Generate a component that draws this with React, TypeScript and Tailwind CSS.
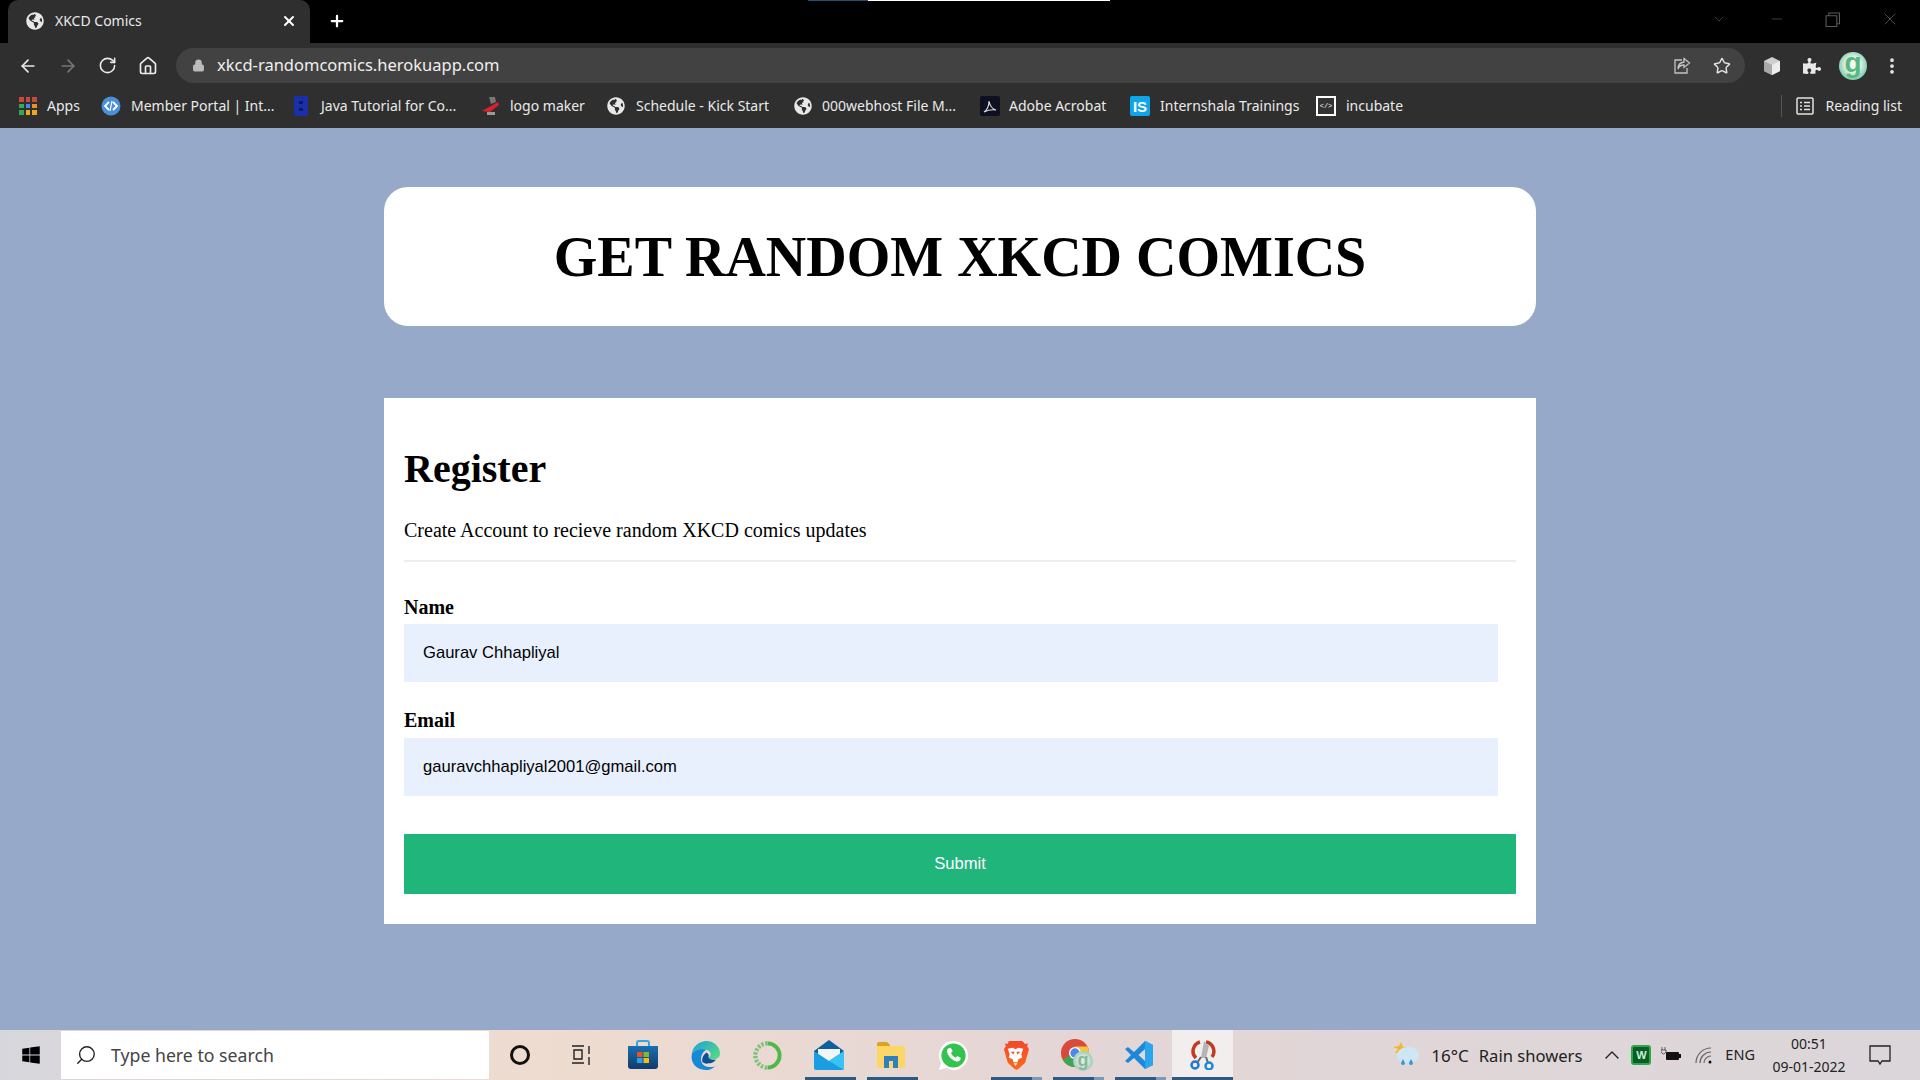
import { ArrowLeft, ArrowRight, RotateCw, Home, Lock, Star, Search, ChevronUp, ChevronDown, Minus, X, Plus, MoreVertical } from "lucide-react";
import { FaGlobeAmericas, FaPuzzlePiece, FaWindows } from "react-icons/fa";

function Globe() {
  return <FaGlobeAmericas className="h-[18px] w-[18px] text-[#e8e8e8]" />;
}

function AppsGrid() {
  const colors = ["bg-[#c9483c]", "bg-[#c9483c]", "bg-[#c9483c]", "bg-[#34a853]", "bg-[#4285f4]", "bg-[#f09020]", "bg-[#34a853]", "bg-[#e8a820]", "bg-[#e8a820]"];
  return (
    <div className="grid h-[18px] w-[18px] grid-cols-3 gap-[2px]">
      {colors.map((c, i) => (
        <div key={i} className={c} />
      ))}
    </div>
  );
}

function MemberIcon() {
  return (
    <svg viewBox="0 0 20 20" className="h-5 w-5">
      <circle cx="10" cy="10" r="9.5" fill="#4a90d9" />
      <path d="M8 6l-4 4 4 4M12 6l4 4-4 4" stroke="#fff" strokeWidth="1.8" fill="none" />
      <path d="M11 5l-2 10" stroke="#fff" strokeWidth="1.2" />
    </svg>
  );
}

function BIcon() {
  return (
    <svg viewBox="0 0 14 20" className="h-5 w-[14px]">
      <rect width="14" height="20" rx="2" fill="#1a2fa8" />
      <rect x="5" y="5" width="4" height="3" fill="#0b1a66" />
      <rect x="5" y="12" width="4" height="3" fill="#0b1a66" />
    </svg>
  );
}

function LogoMakerIcon() {
  return (
    <svg viewBox="0 0 20 20" className="h-5 w-5">
      <path d="M8 1h6l1 5-5 2z" fill="#777" />
      <path d="M1 15L17 6l1 3-9 7z" fill="#d8232e" />
      <rect x="6" y="16" width="8" height="3" fill="#999" />
    </svg>
  );
}

function AcrobatIcon() {
  return (
    <svg viewBox="0 0 20 20" className="h-5 w-5">
      <rect width="20" height="20" rx="2" fill="#0c1020" />
      <path d="M4 16c3-2 5-6 5-11 1 5 3 8 7 9-4-.5-8 0-12 2z" stroke="#ddd" strokeWidth="1.1" fill="none" />
    </svg>
  );
}

function InternshalaIcon() {
  return (
    <div className="flex h-5 w-5 items-center justify-center rounded-[2px] bg-[#0ea5e9] font-['Liberation_Sans',sans-serif] text-[15px] font-bold text-white">IS</div>
  );
}

function IncubateIcon() {
  return (
    <div className="flex h-5 w-5 items-center justify-center border-2 border-white bg-[#333] font-mono text-[7px] text-white">&lt;/&gt;</div>
  );
}

function ReadingIcon() {
  return (
    <svg viewBox="0 0 18 18" className="h-[18px] w-[18px]" fill="none" stroke="#e3e3e3" strokeWidth="1.5">
      <rect x="1" y="1" width="16" height="16" rx="1" />
      <path d="M4 5.500h2M8 5.500h6M4 9h2M8 9h6M4 12.500h2M8 12.500h6" />
    </svg>
  );
}

function ExtCube() {
  return (
    <svg viewBox="0 0 20 20" className="h-5 w-5">
      <path d="M10 1l8 4v10l-8 4-8-4V5z" fill="#cfcfcf" />
      <path d="M10 9l8-4v10l-8 4z" fill="#ededed" />
      <path d="M2 5l8 4v10l-8-4z" fill="#a8a8a8" />
    </svg>
  );
}

function ShareIcon() {
  return (
    <svg viewBox="0 0 18 18" className="h-[18px] w-[18px]" fill="none" stroke="#c4c4c4" strokeWidth="1.3">
      <path d="M9 3H2v13h12v-5" />
      <path d="M11 1.500l5.500 4.500-5.500 4.500V8c-3 0-5 1-6 4 0-4 2-6.500 6-7z" />
    </svg>
  );
}

function Avatar() {
  return (
    <div className="flex h-7 w-7 items-center justify-center rounded-full bg-[radial-gradient(circle_at_50%_45%,#f5f7f2_30%,#7fcfb0_70%,#2a9d8f_100%)] pb-[5px] font-['Liberation_Sans',sans-serif] text-[28px] font-bold leading-none text-[#58b87c]">g</div>
  );
}

const bookmarks = [
  { icon: <AppsGrid />, label: "Apps", box: "w-[82px]", gap: "gap-[10px]" },
  { icon: <MemberIcon />, label: "Member Portal | Int...", box: "w-[193px]", gap: "gap-[10px]" },
  { icon: <BIcon />, label: "Java Tutorial for Co...", box: "w-[187px]", gap: "gap-[13px]" },
  { icon: <LogoMakerIcon />, label: "logo maker", box: "w-[126px]", gap: "gap-[9px]" },
  { icon: <Globe />, label: "Schedule - Kick Start", box: "w-[187px]", gap: "gap-[11px]" },
  { icon: <Globe />, label: "000webhost File M...", box: "w-[186px]", gap: "gap-[10px]" },
  { icon: <AcrobatIcon />, label: "Adobe Acrobat", box: "w-[150px]", gap: "gap-[9px]" },
  { icon: <InternshalaIcon />, label: "Internshala Trainings", box: "w-[186px]", gap: "gap-[10px]" },
  { icon: <IncubateIcon />, label: "incubate", box: "w-[90px]", gap: "gap-[10px]" },
];

function BrowserChrome() {
  return (
    <div className="font-['Noto_Sans',sans-serif] text-[#eaeaea]">
      {/* tab strip */}
      <div className="relative flex h-[43px] items-end bg-black pl-[8px]">
        <div className="absolute left-[808px] top-0 flex h-px w-[302px]">
          <div className="w-[60px] bg-[#2b4a6f]" />
          <div className="flex-1 bg-white" />
        </div>
        <div className="flex h-[43px] w-[302px] items-center rounded-t-[10px] bg-[#2f2f2f] pb-[2px] pl-[18px] pr-[13px]">
          <Globe />
          <span className="ml-[11px] flex-1 text-[14px]">XKCD Comics</span>
          <X className="h-4 w-4 text-white" strokeWidth={3} />
        </div>
        <Plus className="mb-[13px] ml-[18px] h-[18px] w-[18px] text-white" strokeWidth={3} />
        <div className="mb-[14px] ml-auto flex items-center gap-[40px] pr-[20px] text-[#5a5a5a]">
          <ChevronDown className="h-4 w-5" strokeWidth={1} />
          <Minus className="h-4 w-4" strokeWidth={1} />
          <svg viewBox="0 0 14 14" className="h-[15px] w-[15px]" fill="none" stroke="#5a5a5a">
            <path d="M1 3.500h10v10H1zM3.500 3.500V1h10v10H11" />
          </svg>
          <X className="h-5 w-5" strokeWidth={1} />
        </div>
      </div>
      {/* toolbar */}
      <div className="flex h-[47px] items-start bg-[#2f2f2f] pt-[5px]">
        <div className="flex h-[35px] w-[176px] items-center gap-[20px] pl-[18px]">
          <ArrowLeft className="h-5 w-5 text-[#eaeaea]" />
          <ArrowRight className="h-5 w-5 text-[#777]" />
          <RotateCw className="h-[19px] w-[19px] text-[#eaeaea]" />
          <Home className="ml-px h-5 w-5 text-[#eaeaea]" />
        </div>
        <div className="flex h-[35px] w-[1569px] items-center rounded-full bg-[#424242] pl-[16px] pr-[14px]">
          <Lock className="h-[13px] w-[13px] fill-[#bbb] text-[#bbb]" />
          <span className="ml-[12px] flex-1 text-[16.500px] text-[#f0f0f0]">xkcd-randomcomics.herokuapp.com</span>
          <ShareIcon />
          <Star className="ml-[22px] h-[18px] w-[18px] text-[#e0e0e0]" />
        </div>
        <div className="flex h-[35px] flex-1 items-center pl-[17px]">
          <ExtCube />
          <FaPuzzlePiece className="ml-[21px] h-[18px] w-[18px] text-[#e8e8e8]" />
          <div className="ml-[18px]">
            <Avatar />
          </div>
          <MoreVertical className="ml-[15px] h-5 w-5 text-[#e8e8e8]" strokeWidth={2.5} />
        </div>
      </div>
      {/* bookmarks */}
      <div className="flex h-[38px] items-center bg-[#2f2f2f] pb-[6px] pl-[19px] text-[14px] leading-none">
        {bookmarks.map((b) => (
          <div key={b.label} className={`flex shrink-0 items-center ${b.box} ${b.gap}`}>
            {b.icon}
            <span className="whitespace-nowrap">{b.label}</span>
          </div>
        ))}
        <div className="ml-auto flex items-center pr-[18px]">
          <div className="mr-[14px] h-[22px] w-px bg-[#555]" />
          <ReadingIcon />
          <span className="ml-[11px]">Reading list</span>
        </div>
      </div>
    </div>
  );
}

function RegisterForm() {
  return (
    <div className="mt-[72px] h-[526px] bg-white p-5 font-['Liberation_Serif',serif] text-black">
      <h2 className="mt-[27px] text-[40px] font-bold leading-[48px]">Register</h2>
      <p className="mt-[25px] text-[20px] leading-[24px]">Create Account to recieve random XKCD comics updates</p>
      <div className="mt-[18px] h-[2px] bg-[#eeeeee]" />
      <label className="mt-[33px] block text-[20px] font-bold leading-[24px]">Name</label>
      <div className="mt-[5px] flex h-[58px] w-[1094px] items-center bg-[#e8f0fe] pl-[19px] font-['Liberation_Sans',sans-serif] text-[16.600px]">Gaurav Chhapliyal</div>
      <label className="mt-[26px] block text-[20px] font-bold leading-[24px]">Email</label>
      <div className="mt-[6px] flex h-[58px] w-[1094px] items-center bg-[#e8f0fe] pl-[19px] font-['Liberation_Sans',sans-serif] text-[16.600px]">gauravchhapliyal2001@gmail.com</div>
      <button className="mt-[38px] h-[60px] w-full bg-[#1fb57b] font-['Liberation_Sans',sans-serif] text-[16.600px] text-white">Submit</button>
    </div>
  );
}

function StoreIcon() {
  return (
    <svg viewBox="0 0 30 30" className="h-[30px] w-[30px]">
      <defs>
        <linearGradient id="storeBag" x1="0" y1="0" x2="0" y2="1">
          <stop offset="0" stopColor="#1a6fb0" />
          <stop offset="1" stopColor="#123a6a" />
        </linearGradient>
      </defs>
      <path d="M9 7V3a2 2 0 012-2h8a2 2 0 012 2v4" stroke="#35a6e0" strokeWidth="2" fill="none" />
      <path d="M0 6h30v20a3 3 0 01-3 3H3a3 3 0 01-3-3z" fill="url(#storeBag)" />
      <rect x="9" y="12" width="5.500" height="5" fill="#ea4f2c" />
      <rect x="15.500" y="12" width="5.500" height="5" fill="#7fba2e" />
      <rect x="9" y="18" width="5.500" height="5" fill="#24a4e8" />
      <rect x="15.500" y="18" width="5.500" height="5" fill="#fab915" />
    </svg>
  );
}

function EdgeIcon() {
  return (
    <svg viewBox="0 0 32 32" className="h-[31px] w-[31px]">
      <defs>
        <linearGradient id="edgeTop" x1="0" y1="0" x2="1" y2="0.7">
          <stop offset="0" stopColor="#1aa0d8" />
          <stop offset="1" stopColor="#52d88a" />
        </linearGradient>
      </defs>
      <path d="M2 14C3 6 10 1 17 1c8 0 14 6 14 13 0 4-3 6-7 6-3 0-5-1-5-2 3-1 4-6-2-8C11 8 5 10 2 14z" fill="url(#edgeTop)" />
      <path d="M2 14c-2 9 4 17 14 17 4 0 7-1 10-4-5 2-12 1-14-4-2-5 1-11 5-13C11 8 5 10 2 14z" fill="#1588d8" />
      <path d="M13 23c-1-3 0-7 4-10 2 1 3 3 2 5 1 2 6 3 8 2-2 3-5 4-8 4-2 1-4 0-6-1z" fill="#0c4f96" />
    </svg>
  );
}

function RingIcon() {
  return (
    <svg viewBox="0 0 32 32" className="h-[31px] w-[31px]" fill="none">
      <path d="M16 3.500A12.500 12.500 0 0128.500 16 12.500 12.500 0 0116 28.500" stroke="#4fb848" strokeWidth="4" />
      <path d="M16 3.500A12.500 12.500 0 003.500 16 12.500 12.500 0 0016 28.500" stroke="#7cc47a" strokeWidth="4.500" strokeDasharray="2.500 1.500" />
    </svg>
  );
}

function MailIcon() {
  return (
    <svg viewBox="0 0 30 30" className="h-[30px] w-[30px]">
      <path d="M0 11L15 0l15 11v4H0z" fill="#0f5f9e" />
      <path d="M4 9h22v7l-11 6-11-6z" fill="#f2f6fa" />
      <path d="M0 11l15 10 15-10v17a2 2 0 01-2 2H2a2 2 0 01-2-2z" fill="#1b9de2" />
      <path d="M30 11L15 21l15 9z" fill="#38c3f4" />
    </svg>
  );
}

function FilesIcon() {
  return (
    <svg viewBox="0 0 30 26" className="h-[26px] w-[30px]">
      <path d="M1 2a2 2 0 012-2h8l3 3v4H1z" fill="#d9a520" />
      <path d="M1 4h28v22H1z" fill="#fcd667" />
      <path d="M8 26V14h14v12h-5v-7h-4v7z" fill="#2f7fbf" />
    </svg>
  );
}

function WhatsappIcon() {
  return (
    <svg viewBox="0 0 32 32" className="h-[31px] w-[31px]">
      <path d="M16 1a15 15 0 11-7.500 28L1 31l2-7.500A15 15 0 0116 1z" fill="#fff" />
      <circle cx="16" cy="16" r="12.500" fill="#35c24f" />
      <path d="M11 8.500c-1.500.8-2 2.500-1.500 4.500 1.200 4 5 8 9 9 2 .5 3.500 0 4.500-1.500l.5-2-3.500-2-1.800 1.800c-2-.8-4-2.800-4.800-4.800l1.800-1.800-2-3.800z" fill="#fff" />
    </svg>
  );
}

function BraveIcon() {
  return (
    <svg viewBox="0 0 28 32" className="h-[31px] w-[27px]">
      <defs>
        <linearGradient id="braveBody" x1="0" y1="0" x2="0" y2="1">
          <stop offset="0" stopColor="#f2482a" />
          <stop offset="1" stopColor="#fb6a1a" />
        </linearGradient>
      </defs>
      <path d="M7 1h14l3 3 3-.5-1 3 2 3-4 14-7 6.500-2 1-2-1-7-6.500-4-14 2-3-1-3 3 .5z" fill="url(#braveBody)" />
      <path d="M6 9l5-1 3 1.500L17 8l5 1-2 6 1 3-4 2-1 3h-4l-1-3-4-2 1-3z" fill="#fff" />
      <path d="M9 12h4l-1 3zM19 12h-4l1 3z" fill="#f2482a" />
      <path d="M12 24h4l-2 3z" fill="#fff" />
    </svg>
  );
}

function ChromeIcon() {
  return (
    <div className="relative h-[32px] w-[32px]">
      <svg viewBox="0 0 30 30" className="h-[28px] w-[28px]">
        <circle cx="15" cy="15" r="15" fill="#d84a3c" />
        <path d="M15 15L2 22A15 15 0 0015 30l13-15z" fill="#3ca655" />
        <path d="M15 8h13.500A15 15 0 0130 15l-15 15z" fill="#f5c63a" />
        <circle cx="15" cy="15" r="6.500" fill="#fff" />
        <circle cx="15" cy="15" r="5" fill="#4a8af0" />
      </svg>
      <div className="absolute bottom-0 right-0 flex h-5 w-5 items-center justify-center rounded-full bg-[radial-gradient(circle,#dfe9e2_30%,#6fb8a0_100%)] pb-[3px] font-['Liberation_Sans',sans-serif] text-[18px] font-bold leading-none text-[#86b89a]">g</div>
    </div>
  );
}

function VscodeIcon() {
  return (
    <svg viewBox="0 0 30 30" className="h-[30px] w-[30px]">
      <path d="M21 1l8 4v20l-8 4-11-11-6 5-3-2 6-6-6-6 3-2 6 5z" fill="#1e88d8" />
      <path d="M21 1l8 4v20l-8 4z" fill="#2aa5ee" />
      <path d="M21 9l-6.500 6 6.500 6z" fill="#e2d8d8" />
    </svg>
  );
}

function SnipIcon() {
  return (
    <svg viewBox="0 0 26 30" className="h-[30px] w-[26px]" fill="none">
      <path d="M6 18A9.500 9.500 0 0110 2M16 2a9.500 9.500 0 016 15" stroke="#c23a22" strokeWidth="3.500" />
      <path d="M14 1l-3 17 5 0 3-12z" fill="#b5b5b5" />
      <path d="M11 17l-4 6M16 17l2 6" stroke="#666" strokeWidth="2" />
      <circle cx="5" cy="25" r="3.500" stroke="#1e78d8" strokeWidth="2.500" />
      <circle cx="19" cy="26" r="3.500" stroke="#1e88d8" strokeWidth="2.500" />
    </svg>
  );
}

const taskIcons = [
  { id: "store", el: <StoreIcon />, bar: "none" },
  { id: "edge", el: <EdgeIcon />, bar: "none" },
  { id: "ring", el: <RingIcon />, bar: "none" },
  { id: "mail", el: <MailIcon />, bar: "open" },
  { id: "files", el: <FilesIcon />, bar: "open" },
  { id: "whatsapp", el: <WhatsappIcon />, bar: "none" },
  { id: "brave", el: <BraveIcon />, bar: "multi" },
  { id: "chrome", el: <ChromeIcon />, bar: "multi" },
  { id: "vscode", el: <VscodeIcon />, bar: "multi" },
];

function Taskbar() {
  return (
    <div className="flex h-[50px] items-stretch bg-[linear-gradient(90deg,#d6d6dc_0%,#efdcd0_28%,#e4d6d6_55%,#dbd6da_100%)] font-['Noto_Sans',sans-serif] text-[#222]">
      <div className="flex w-[61px] items-center justify-center">
        <FaWindows className="h-5 w-5 text-black" />
      </div>
      <div className="my-px flex w-[428px] items-center bg-white pl-[14px] text-[17.700px] text-[#444]">
        <Search className="h-[22px] w-[22px] -scale-x-100 text-[#222]" strokeWidth={1.5} />
        <span className="ml-[14px]">Type here to search</span>
      </div>
      <div className="flex w-[62px] items-center justify-center">
        <div className="h-5 w-5 rounded-full border-[3px] border-[#111]" />
      </div>
      <div className="flex w-[61px] items-center justify-center">
        <svg viewBox="0 0 22 20" className="h-5 w-[22px]" fill="none" stroke="#222" strokeWidth="1.4">
          <path d="M1 1h12M3 5h8v9H3zM1 18h12M18 1v8M18 12v8" />
        </svg>
      </div>
      {taskIcons.map((t) => (
        <div key={t.id} className="relative flex w-[62px] items-center justify-center">
          {t.el}
          {t.bar === "open" && <div className="absolute bottom-0 left-[7px] h-[3px] w-[51px] bg-[#2b5a84]" />}
          {t.bar === "multi" && (
            <div className="absolute bottom-0 left-[7px] flex h-[3px] w-[51px]">
              <div className="flex-1 bg-[#2b5a84]" />
              <div className="w-[10px] bg-[#7b9ab8]" />
            </div>
          )}
        </div>
      ))}
      <div className="relative ml-[2px] flex w-[61px] items-center justify-center bg-[#f2eeee]">
        <SnipIcon />
        <div className="absolute bottom-0 left-0 h-[3px] w-full bg-[#2b5a84]" />
      </div>
      {/* tray */}
      <div className="ml-auto flex items-center text-[#222]">
        <svg viewBox="0 0 28 30" className="h-[30px] w-[28px]">
          <path d="M9 2l2 5 6 0-5 6H3l3-4-5-2 6-1z" fill="#f2b824" />
          <ellipse cx="16" cy="15" rx="11" ry="8" fill="#cfe6f5" />
          <path d="M11 19l2 4a2 2 0 11-4 0zM19 19l2 4a2 2 0 11-4 0z" fill="#3a94dc" />
        </svg>
        <span className="ml-[11px] mt-[2px] text-[17px]">16°C</span>
        <span className="ml-[10px] mt-[2px] text-[16.600px]">Rain showers</span>
        <ChevronUp className="ml-[18px] h-6 w-6 text-[#222]" strokeWidth={1.4} />
        <div className="ml-[7px] flex h-5 w-5 items-center justify-center rounded-[3px] border-2 border-[#2aa84a] bg-[#0a5c28] font-['Liberation_Sans',sans-serif] text-[11px] font-bold text-[#c8f0d0]">W</div>
        <svg viewBox="0 0 20 16" className="ml-[10px] h-[16px] w-5" fill="#111">
          <rect x="5" y="5" width="13" height="8" rx="1" />
          <rect x="18" y="7" width="2" height="4" />
          <path d="M1 0v3M4 0v3M0 3h5v2L3 7H2L0 5z" stroke="#111" strokeWidth="0.6" fill="none" />
        </svg>
        <svg viewBox="0 0 20 20" className="ml-[13px] h-5 w-5" fill="none" stroke="#666" strokeWidth="1.2">
          <path d="M2 18A15 15 0 0117 3M6 18A11 11 0 0117 7M10 18a7 7 0 017-7" />
          <circle cx="16" cy="17" r="1.500" fill="#111" stroke="none" />
        </svg>
        <span className="ml-[11px] text-[14.500px]">ENG</span>
        <div className="ml-[16px] flex w-[76px] flex-col items-center text-[14px] leading-[23px]">
          <span>00:51</span>
          <span>09-01-2022</span>
        </div>
        <svg viewBox="0 0 22 22" className="ml-[22px] mr-[29px] h-[22px] w-[22px]" fill="none" stroke="#222" strokeWidth="1.3">
          <path d="M1 2h20v15h-8l-2 3-2-3H1z" />
        </svg>
      </div>
    </div>
  );
}

export default function App() {
  return (
    <div className="flex h-screen flex-col overflow-hidden bg-[#96a9c8]">
      <BrowserChrome />
      <main className="flex-1">
        <div className="mx-auto mt-[59px] w-[1152px]">
          <div className="flex h-[139px] items-center justify-center rounded-[24px] bg-white font-['Liberation_Serif',serif]">
            <h1 className="text-[56px] font-bold text-black">GET RANDOM XKCD COMICS</h1>
          </div>
          <RegisterForm />
        </div>
      </main>
      <Taskbar />
    </div>
  );
}
